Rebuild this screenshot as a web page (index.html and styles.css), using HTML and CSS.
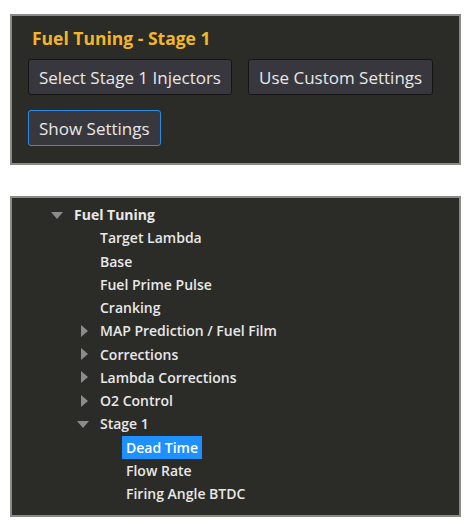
FILE: index.html
```html
<!DOCTYPE html>
<html lang="en">
<head>
  <meta charset="UTF-8" />
  <meta name="viewport" content="width=device-width, initial-scale=1.0" />
  <title>Fuel Tuning - Stage 1</title>
  <link rel="stylesheet" href="styles.css">
</head>
<body>
  <section class="panel stage-panel">
    <h2 class="stage-title">Fuel Tuning - Stage 1</h2>
    <div class="btn-row">
      <button class="btn">Select Stage 1 Injectors</button>
      <button class="btn">Use Custom Settings</button>
    </div>
    <div class="btn-row">
      <button class="btn focused">Show Settings</button>
    </div>
  </section>

  <section class="panel tree-panel">
    <ul class="tree">
      <li class="node open">
        <div class="row root"><span class="arrow down"></span><span class="label">Fuel Tuning</span></div>
        <ul>
          <li><div class="row"><span class="arrow"></span><span class="label">Target Lambda</span></div></li>
          <li><div class="row"><span class="arrow"></span><span class="label">Base</span></div></li>
          <li><div class="row"><span class="arrow"></span><span class="label">Fuel Prime Pulse</span></div></li>
          <li><div class="row"><span class="arrow"></span><span class="label">Cranking</span></div></li>
          <li><div class="row"><span class="arrow right"></span><span class="label">MAP Prediction / Fuel Film</span></div></li>
          <li><div class="row"><span class="arrow right"></span><span class="label">Corrections</span></div></li>
          <li><div class="row"><span class="arrow right"></span><span class="label">Lambda Corrections</span></div></li>
          <li><div class="row"><span class="arrow right"></span><span class="label">O2 Control</span></div></li>
          <li class="node open">
            <div class="row"><span class="arrow down"></span><span class="label">Stage 1</span></div>
            <ul>
              <li><div class="row"><span class="arrow"></span><span class="label selected">Dead Time</span></div></li>
              <li><div class="row"><span class="arrow"></span><span class="label">Flow Rate</span></div></li>
              <li><div class="row"><span class="arrow"></span><span class="label">Firing Angle BTDC</span></div></li>
            </ul>
          </li>
        </ul>
      </li>
    </ul>
  </section>
</body>
</html>
```

FILE: styles.css
```css
:root {
  --panel-bg: #2b2b27;
  --panel-border: #8a8a88;
  --btn-bg: #38373d;
  --btn-border: #141414;
  --text: #e8e8e8;
  --title: #f2b628;
  --arrow: #8c8c8c;
  --select: #1e90ff;
}

* {
  margin: 0;
  padding: 0;
  box-sizing: border-box;
  font-family: 'Open Sans', 'Noto Sans', sans-serif;
}

body {
  background: #ffffff;
  padding: 14px 0 0 10px;
}

.panel {
  background: var(--panel-bg);
  border: 2px solid var(--panel-border);
  width: 451px;
}

.stage-panel {
  height: 151px;
  padding: 10px 0 0 16px;
}

.stage-title {
  font-size: 17.5px;
  font-weight: 700;
  color: var(--title);
  margin-left: 4px;
  line-height: 24px;
  margin-bottom: 9px;
}

.btn-row {
  display: flex;
  gap: 16px;
  margin-bottom: 15px;
}

.btn {
  height: 36px;
  padding: 0 10px;
  background: var(--btn-bg);
  color: var(--text);
  border: 1px solid var(--btn-border);
  border-radius: 3px;
  font-size: 17px;
}

.btn.focused {
  border-color: #2b8ce6;
}

.tree-panel {
  margin-top: 31px;
  height: 321px;
  padding: 5px 0 0 38px;
}

.tree, .tree ul {
  list-style: none;
}

.tree ul {
  padding-left: 26px;
}

.row {
  display: flex;
  align-items: center;
  height: 23.25px;
}

.arrow {
  width: 24px;
  height: 12px;
  flex-shrink: 0;
  position: relative;
}

.arrow.down::before {
  content: "";
  position: absolute;
  left: 1px;
  top: 3px;
  border-left: 6px solid transparent;
  border-right: 6px solid transparent;
  border-top: 7px solid var(--arrow);
}

.arrow.right::before {
  content: "";
  position: absolute;
  left: 5px;
  top: 0;
  border-top: 6px solid transparent;
  border-bottom: 6px solid transparent;
  border-left: 7px solid var(--arrow);
}

.label {
  font-size: 14px;
  font-weight: 600;
  color: var(--text);
  line-height: 23px;
}

.root .label {
  font-weight: 700;
}

.label.selected {
  background: var(--select);
  color: #ffffff;
  padding: 0 4px;
  margin-left: -4px;
}
```
